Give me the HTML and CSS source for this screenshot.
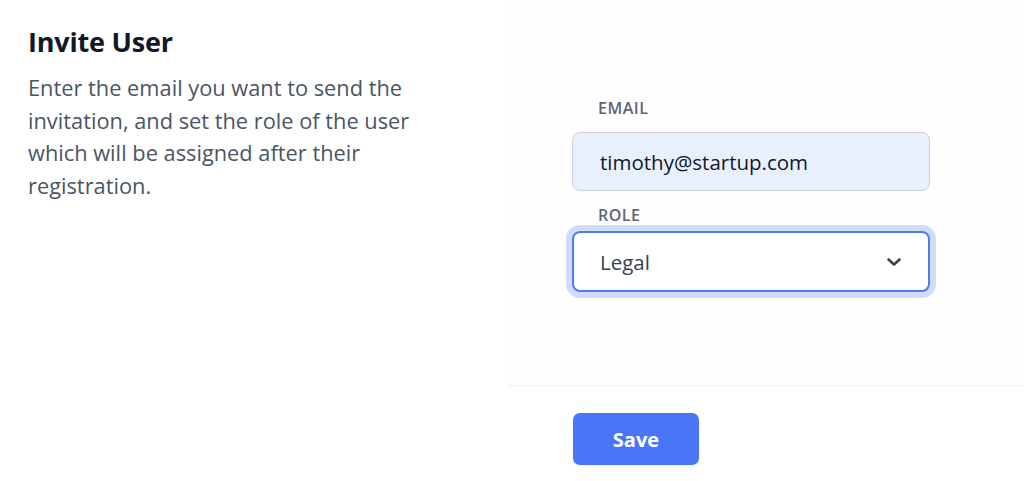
FILE: index.html
```html
<!DOCTYPE html>
<html lang="en">
<head>
<meta charset="utf-8">
<title>Invite User</title>
<link rel="stylesheet" href="styles.css">
</head>
<body>
<div class="page">
  <section class="intro">
    <h1 class="intro-title">Invite User</h1>
    <p class="intro-text">Enter the email you want to send the invitation, and set the role of the user which will be assigned after their registration.</p>
  </section>
  <section class="panel">
    <form class="form">
      <div class="fields">
        <div class="field">
          <label class="field-label" for="email">EMAIL</label>
          <div class="input input-email" id="email">timothy@startup.com</div>
        </div>
        <div class="field">
          <label class="field-label field-label-role" for="role">ROLE</label>
          <div class="input input-select" id="role">
            <span>Legal</span>
            <svg class="chevron" width="16" height="10" viewBox="0 0 16 10" aria-hidden="true"><path d="M2.5 2.5l5.5 5 5.5-5" fill="none" stroke="#374151" stroke-width="2.6" stroke-linecap="round" stroke-linejoin="round"/></svg>
          </div>
        </div>
      </div>
      <div class="actions">
        <button type="button" class="btn-save">Save</button>
      </div>
    </form>
  </section>
</div>
</body>
</html>
```

FILE: styles.css
```css
* { box-sizing: border-box; }
html, body { margin: 0; padding: 0; }
body {
  background: #ffffff;
  font-family: "Open Sans", "Noto Sans", sans-serif;
  color: #111827;
}
.page {
  display: grid;
  grid-template-columns: 508px 1fr;
  height: 481px;
}
.intro {
  padding: 24px 28px;
}
.intro-title {
  margin: 0;
  font-size: 27px;
  line-height: 36px;
  font-weight: 700;
  color: #111827;
  letter-spacing: -0.2px;
}
.intro-text {
  margin: 12px 0 0;
  font-size: 21.8px;
  line-height: 32.6px;
  color: #4b5563;
  max-width: 410px;
}
.panel {
  background: #fefefe;
}
.form {
  display: flex;
  flex-direction: column;
  height: 100%;
}
.fields {
  height: 385px;
  padding: 98px 94px 0 64px;
  display: flex;
  flex-direction: column;
  gap: 14px;
}
.field {
  display: flex;
  flex-direction: column;
}
.field-label {
  padding-left: 26px;
  font-size: 16px;
  line-height: 21px;
  font-weight: 600;
  color: #5f6574;
  letter-spacing: 0.5px;
  margin-bottom: 13px;
}
.field-label-role { margin-bottom: 5px; }
.input {
  height: 59px;
  border-radius: 8px;
  padding: 0 28px 0 27px;
  display: flex;
  align-items: center;
  font-size: 20.5px;
}
.input-email {
  background: #e8f0fe;
  border: 1px solid #cdd2da;
  color: #111827;
}
.input-select {
  height: 61px;
  background: #ffffff;
  border: 2px solid #4f7cf6;
  box-shadow: 0 0 0 6px #d0dcfc;
  color: #374151;
  justify-content: space-between;
  padding-left: 26px;
  padding-right: 26px;
}
.chevron { display: block; }
.actions {
  border-top: 1px solid #f0f1f3;
  padding: 27px 0 0 65px;
  background: #ffffff;
  flex: 1;
}
.btn-save {
  width: 126px;
  height: 52px;
  border: none;
  border-radius: 7px;
  background: #4a75f6;
  color: #ffffff;
  font-family: inherit;
  font-size: 20px;
  font-weight: 700;
  box-shadow: 0 1px 2px rgba(0,0,0,0.08);
}
```
